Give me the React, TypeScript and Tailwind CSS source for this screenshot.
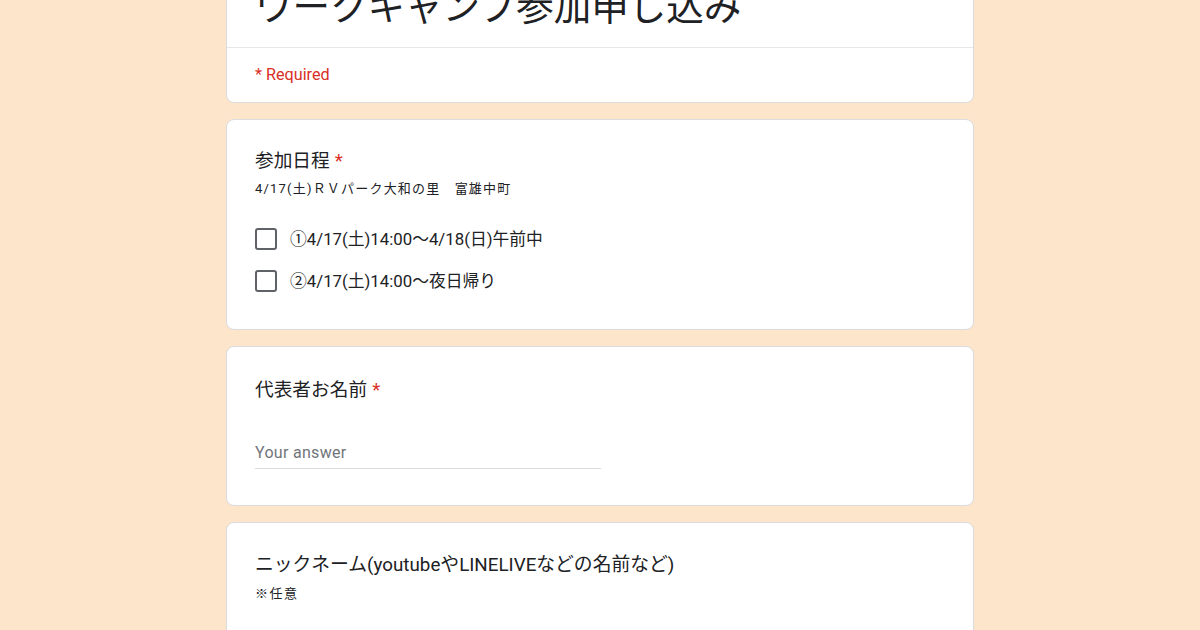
import React from "react";

const FONT = "font-['Roboto','Noto_Sans_CJK_JP',sans-serif]";

function Star() {
  return <span className="ml-[5px] text-[#d93025]">*</span>;
}

function Card({ children, className = "" }: { children: React.ReactNode; className?: string }) {
  return (
    <div className={`rounded-[8px] border border-[#dadce0] bg-white ${className}`}>{children}</div>
  );
}

function Option({ label }: { label: string }) {
  return (
    <label className="flex h-[42px] items-center gap-[13px]">
      <span className="h-[22px] w-[22px] shrink-0 rounded-[3px] border-2 border-[#5f6368]" />
      <span className="text-[16.8px] leading-[22px] text-[#202124]">{label}</span>
    </label>
  );
}

export default function App() {
  return (
    <div className={`min-h-[630px] w-full overflow-hidden bg-[#fde5cc] ${FONT}`}>
      <div className="mx-auto -mt-[18px] flex w-[748px] flex-col gap-[16px]">
        {/* Title card */}
        <Card>
          <div className="border-b border-[#e5e7ea] px-[28px] pb-[16px]">
            <h1 className="text-[37.5px] leading-[48px] font-normal text-[#202124]">
              ワークキャンプ参加申し込み
            </h1>
          </div>
          <div className="px-[28px] pt-[17px] pb-[17px]">
            <p className="text-[16.2px] leading-[20px] text-[#d93025]">* Required</p>
          </div>
        </Card>

        {/* 参加日程 */}
        <Card className="h-[211px] px-[28px] pt-[29px]">
          <p className="text-[18.7px] leading-[24px] text-[#202124]">
            参加日程
            <Star />
          </p>
          <p className="mt-[6px] text-[13px] leading-[20px] tracking-[1.2px] text-[#202124]">
            4/17(土)ＲＶパーク大和の里　富雄中町
          </p>
          <div className="mt-[19px] flex flex-col">
            <Option label="①4/17(土)14:00〜4/18(日)午前中" />
            <Option label="②4/17(土)14:00〜夜日帰り" />
          </div>
        </Card>

        {/* 代表者お名前 */}
        <Card className="h-[160px] px-[28px] pt-[31px]">
          <p className="text-[18.7px] leading-[24px] text-[#202124]">
            代表者お名前
            <Star />
          </p>
          <div className="mt-[40px] w-[346px] border-b border-[#dadce0] pb-[4px]">
            <p className="text-[16px] leading-[22px] tracking-[0.3px] text-[#70757a]">Your answer</p>
          </div>
        </Card>

        {/* ニックネーム */}
        <Card className="h-[140px] px-[28px] pt-[30px]">
          <p className="text-[18.8px] leading-[24px] text-[#202124]">
            ニックネーム(youtubeやLINELIVEなどの名前など)
          </p>
          <p className="mt-[7px] text-[13px] leading-[20px] tracking-[1.5px] text-[#202124]">※任意</p>
        </Card>
      </div>
    </div>
  );
}
